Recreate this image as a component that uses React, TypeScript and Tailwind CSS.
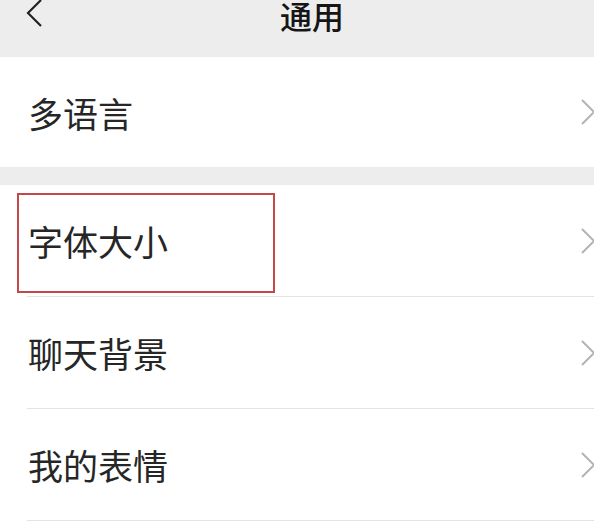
import React from 'react';

const rows = ['字体大小', '聊天背景', '我的表情'];

function Chevron() {
  return (
    <svg className="w-[16px] h-[28px] shrink-0" viewBox="0 0 16 28" fill="none" stroke="#b4b4b4" strokeWidth={2}>
      <polyline points="2,2 14,14 2,26" />
    </svg>
  );
}

function Row({ label, boxed }: { label: string; boxed?: boolean }) {
  return (
    <div className="relative h-[111px] flex items-center justify-between pl-[28px] pr-0">
      <span className="text-[35px] text-[#262626] leading-none">{label}</span>
      <div className="mr-[-2px]">
        <Chevron />
      </div>
      {boxed && (
        <div className="absolute left-[17px] top-[8px] w-[258px] h-[100px] border-2 border-[#c4484a]" />
      )}
    </div>
  );
}

export default function App() {
  return (
    <div className="w-[594px] h-[526px] overflow-hidden bg-white font-['Noto_Sans_CJK_SC',sans-serif]">
      <div className="relative h-[57px] bg-[#ededed] flex justify-center">
        <svg className="absolute left-[24px] top-[-2px] w-[20px] h-[30px]" viewBox="0 0 20 30" fill="none" stroke="#222" strokeWidth={2.2}>
          <polyline points="17,2 4,15 17,28" />
        </svg>
        <span className="ml-[30px] text-[32px] leading-[30px] text-[#151515] font-medium">通用</span>
      </div>
      <div className="h-[110px] flex items-center justify-between pl-[28px]">
        <span className="text-[35px] text-[#262626] leading-none">多语言</span>
        <div className="mr-[-2px]">
          <Chevron />
        </div>
      </div>
      <div className="h-[18px] bg-[#ededed]" />
      {rows.map((r, i) => (
        <div key={r}>
          <Row label={r} boxed={i === 0} />
          <div className="ml-[27px] h-px bg-[#e3e3e3]" />
        </div>
      ))}
    </div>
  );
}
